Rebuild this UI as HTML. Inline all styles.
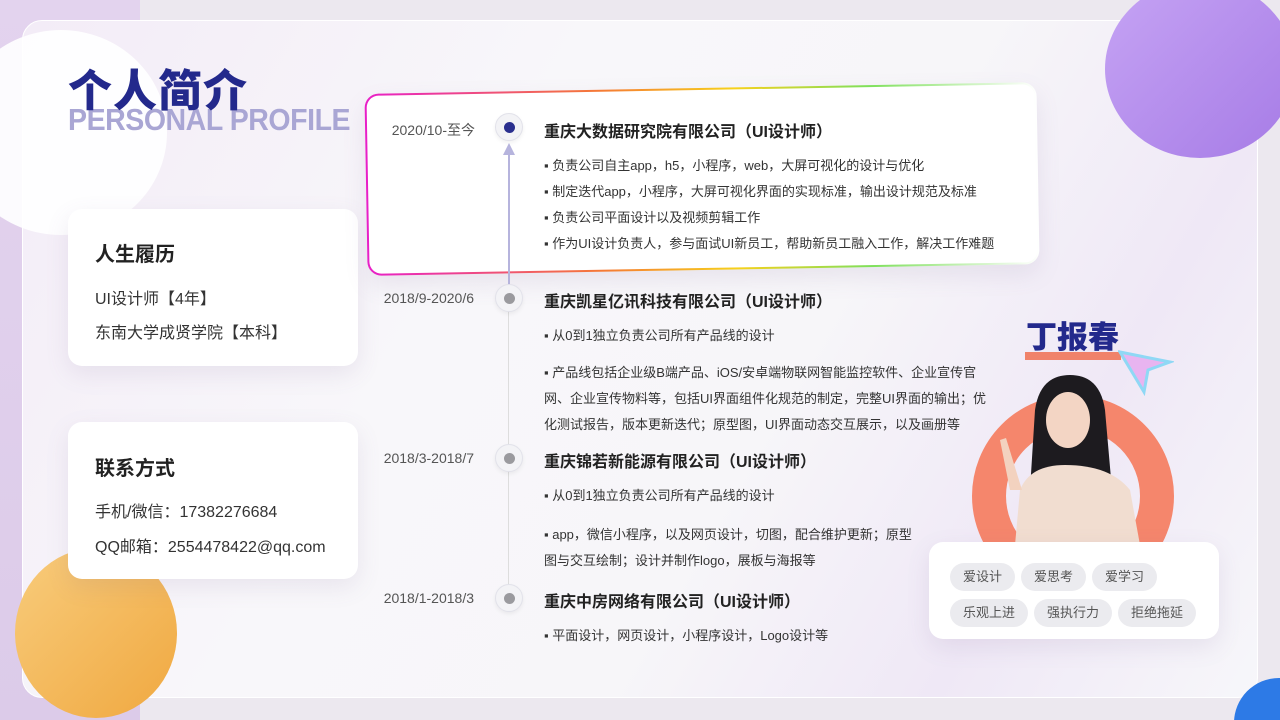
<!DOCTYPE html>
<html style="width:1280px;height:720px;overflow:hidden"><head><meta charset="utf-8"><style>
*{margin:0;padding:0;box-sizing:border-box}
body{width:1280px;height:720px;overflow:hidden;background:#ece8ef;font-family:"Liberation Sans","Noto Sans CJK SC",sans-serif;color:#222}
#w{position:relative;width:1280px;height:720px;overflow:hidden}
.abs{position:absolute}
.card{left:22px;top:20px;width:1236px;height:678px;border-radius:20px;background:linear-gradient(120deg,#f3ecf7 0%,#f8f7fa 35%,#f7f6f9 60%,#efe8f6 80%,#f7f7fa 100%);border:1px solid #fff;overflow:hidden}
.box{background:#fff;border-radius:14px;box-shadow:0 8px 24px rgba(120,100,150,.12)}
.t1{font-size:20px;font-weight:bold;color:#222}
.li{font-size:16px;color:#333}
.date{font-size:14px;color:#555;text-align:right;width:120px}
.co{font-size:16px;font-weight:bold;color:#222}
.b{font-size:13px;color:#333;line-height:26px}
.dot{width:28px;height:28px;border-radius:50%;background:#f3f3f6;border:1px solid #e2e2ea;box-shadow:0 2px 4px rgba(0,0,0,.06)}
.dot i{position:absolute;left:8px;top:8px;width:11px;height:11px;border-radius:50%;background:#9a9a9e}
.tag{display:inline-block;height:28px;line-height:28px;padding:0 13px;border-radius:14px;background:#ebebef;color:#555;font-size:13px;margin-right:6px;white-space:nowrap}
</style></head><body><div id="w">
<div class="abs" style="left:0;top:0;width:140px;height:720px;background:linear-gradient(#e3d3ee,#dccbe9)"></div>
<div class="abs card"></div>
<div class="abs" style="left:1105px;top:-20px;width:190px;height:178px;border-radius:50%;background:linear-gradient(135deg,#c6a4f4,#a67be6)"></div>
<div class="abs" style="left:-45px;top:30px;width:212px;height:205px;border-radius:50%;background:#fff;opacity:.9"></div>
<div class="abs" style="left:15px;top:548px;width:162px;height:170px;border-radius:50%;background:linear-gradient(135deg,#f8cc7c,#f0a840)"></div>
<div class="abs" style="left:1234px;top:678px;width:90px;height:90px;border-radius:50%;background:#2d7ae6"></div>
<div class="abs" style="left:68px;top:104px;font-size:31px;font-weight:bold;color:#a9a6d4;line-height:1;transform:scaleX(0.92);transform-origin:left;letter-spacing:-0.5px;white-space:nowrap">PERSONAL PROFILE</div>
<div class="abs" style="left:68px;top:70px;font-size:44px;font-weight:900;color:#23298c;line-height:1;letter-spacing:1px">个人简介</div>

<div class="abs box" style="left:68px;top:209px;width:290px;height:157px"></div>
<div class="abs t1" style="left:95px;top:238px">人生履历</div>
<div class="abs li" style="left:95px;top:285px">UI设计师【4年】</div>
<div class="abs li" style="left:95px;top:319px">东南大学成贤学院【本科】</div>
<div class="abs box" style="left:68px;top:422px;width:290px;height:157px"></div>
<div class="abs t1" style="left:95px;top:452px">联系方式</div>
<div class="abs li" style="left:95px;top:498px">手机/微信：17382276684</div>
<div class="abs li" style="left:95px;top:533px">QQ邮箱：2554478422@qq.com</div>

<div class="abs" style="left:366px;top:88px;width:672px;height:182px;border-radius:14px;padding:2px;background:linear-gradient(90deg,#e81fc8,#f57a35 35%,#f7d11b 55%,#7ee05b 75%,#fff 100%);transform:rotate(-1deg);box-shadow:0 10px 24px rgba(120,100,150,.12)"><div style="width:100%;height:100%;border-radius:12px;background:#fff"></div></div>
<div class="abs" style="left:508px;top:150px;width:2px;height:135px;background:#b6b4dd"></div>
<div class="abs" style="left:503px;top:143px;width:0;height:0;border-left:6px solid transparent;border-right:6px solid transparent;border-bottom:12px solid #b6b4dd"></div>
<div class="abs" style="left:508px;top:310px;width:1px;height:300px;background:#ddd"></div>

<div class="abs date" style="left:355px;top:120px">2020/10-至今</div>
<div class="abs dot" style="left:495px;top:113px"><i style="background:#2a2f8e;"></i></div>
<div class="abs co" style="left:544px;top:118px">重庆大数据研究院有限公司（UI设计师）</div>
<div class="abs b" style="left:544px;top:153px;white-space:nowrap">▪ 负责公司自主app，h5，小程序，web，大屏可视化的设计与优化<br>▪ 制定迭代app，小程序，大屏可视化界面的实现标准，输出设计规范及标准<br>▪ 负责公司平面设计以及视频剪辑工作<br>▪ 作为UI设计负责人，参与面试UI新员工，帮助新员工融入工作，解决工作难题</div>

<div class="abs date" style="left:354px;top:290px">2018/9-2020/6</div>
<div class="abs dot" style="left:495px;top:284px"><i></i></div>
<div class="abs co" style="left:544px;top:288px">重庆凯星亿讯科技有限公司（UI设计师）</div>
<div class="abs b" style="left:544px;top:323px">▪ 从0到1独立负责公司所有产品线的设计</div>
<div class="abs b" style="left:544px;top:360px;width:448px">▪ 产品线包括企业级B端产品、iOS/安卓端物联网智能监控软件、企业宣传官网、企业宣传物料等，包括UI界面组件化规范的制定，完整UI界面的输出；优化测试报告，版本更新迭代；原型图，UI界面动态交互展示，以及画册等</div>

<div class="abs date" style="left:354px;top:450px">2018/3-2018/7</div>
<div class="abs dot" style="left:495px;top:444px"><i></i></div>
<div class="abs co" style="left:544px;top:448px">重庆锦若新能源有限公司（UI设计师）</div>
<div class="abs b" style="left:544px;top:483px">▪ 从0到1独立负责公司所有产品线的设计</div>
<div class="abs b" style="left:544px;top:522px;width:376px">▪ app，微信小程序，以及网页设计，切图，配合维护更新；原型图与交互绘制；设计并制作logo，展板与海报等</div>

<div class="abs date" style="left:354px;top:590px">2018/1-2018/3</div>
<div class="abs dot" style="left:495px;top:584px"><i></i></div>
<div class="abs co" style="left:544px;top:588px">重庆中房网络有限公司（UI设计师）</div>
<div class="abs b" style="left:544px;top:623px">▪ 平面设计，网页设计，小程序设计，Logo设计等</div>

<div class="abs" style="left:1025px;top:352px;width:96px;height:8px;background:#f0826a"></div>
<div class="abs" style="left:1026px;top:322px;font-size:31px;font-weight:900;color:#23298c;line-height:1">丁报春</div>
<svg class="abs" style="left:1118px;top:348px" width="56" height="48"><polygon points="2,4 52,14 30,22 26,44" fill="#e8b4f0" stroke="#8fd8f5" stroke-width="3"/></svg>

<div class="abs" style="left:972px;top:395px;width:202px;height:202px;border-radius:50%;border:34px solid #f5866c"></div>
<svg class="abs" style="left:990px;top:370px" width="160" height="175">
<path d="M45 40 Q50 5 80 5 Q110 5 115 40 L122 120 L40 120 Z" fill="#1d1b1f"/>
<ellipse cx="78" cy="50" rx="22" ry="28" fill="#f3d5c4"/>
<path d="M30 120 Q40 95 75 95 Q120 95 140 120 L150 175 L25 175 Z" fill="#f1ddd0"/>
<path d="M20 120 L10 70 L16 68 L32 120 Z" fill="#f3d2bf"/>
</svg>

<div class="abs box" style="left:929px;top:542px;width:290px;height:97px"></div>
<div class="abs" style="left:950px;top:559px;width:265px;line-height:36px;white-space:nowrap">
<span class="tag">爱设计</span><span class="tag">爱思考</span><span class="tag">爱学习</span><br>
<span class="tag">乐观上进</span><span class="tag">强执行力</span><span class="tag">拒绝拖延</span></div>
</div></body></html>
